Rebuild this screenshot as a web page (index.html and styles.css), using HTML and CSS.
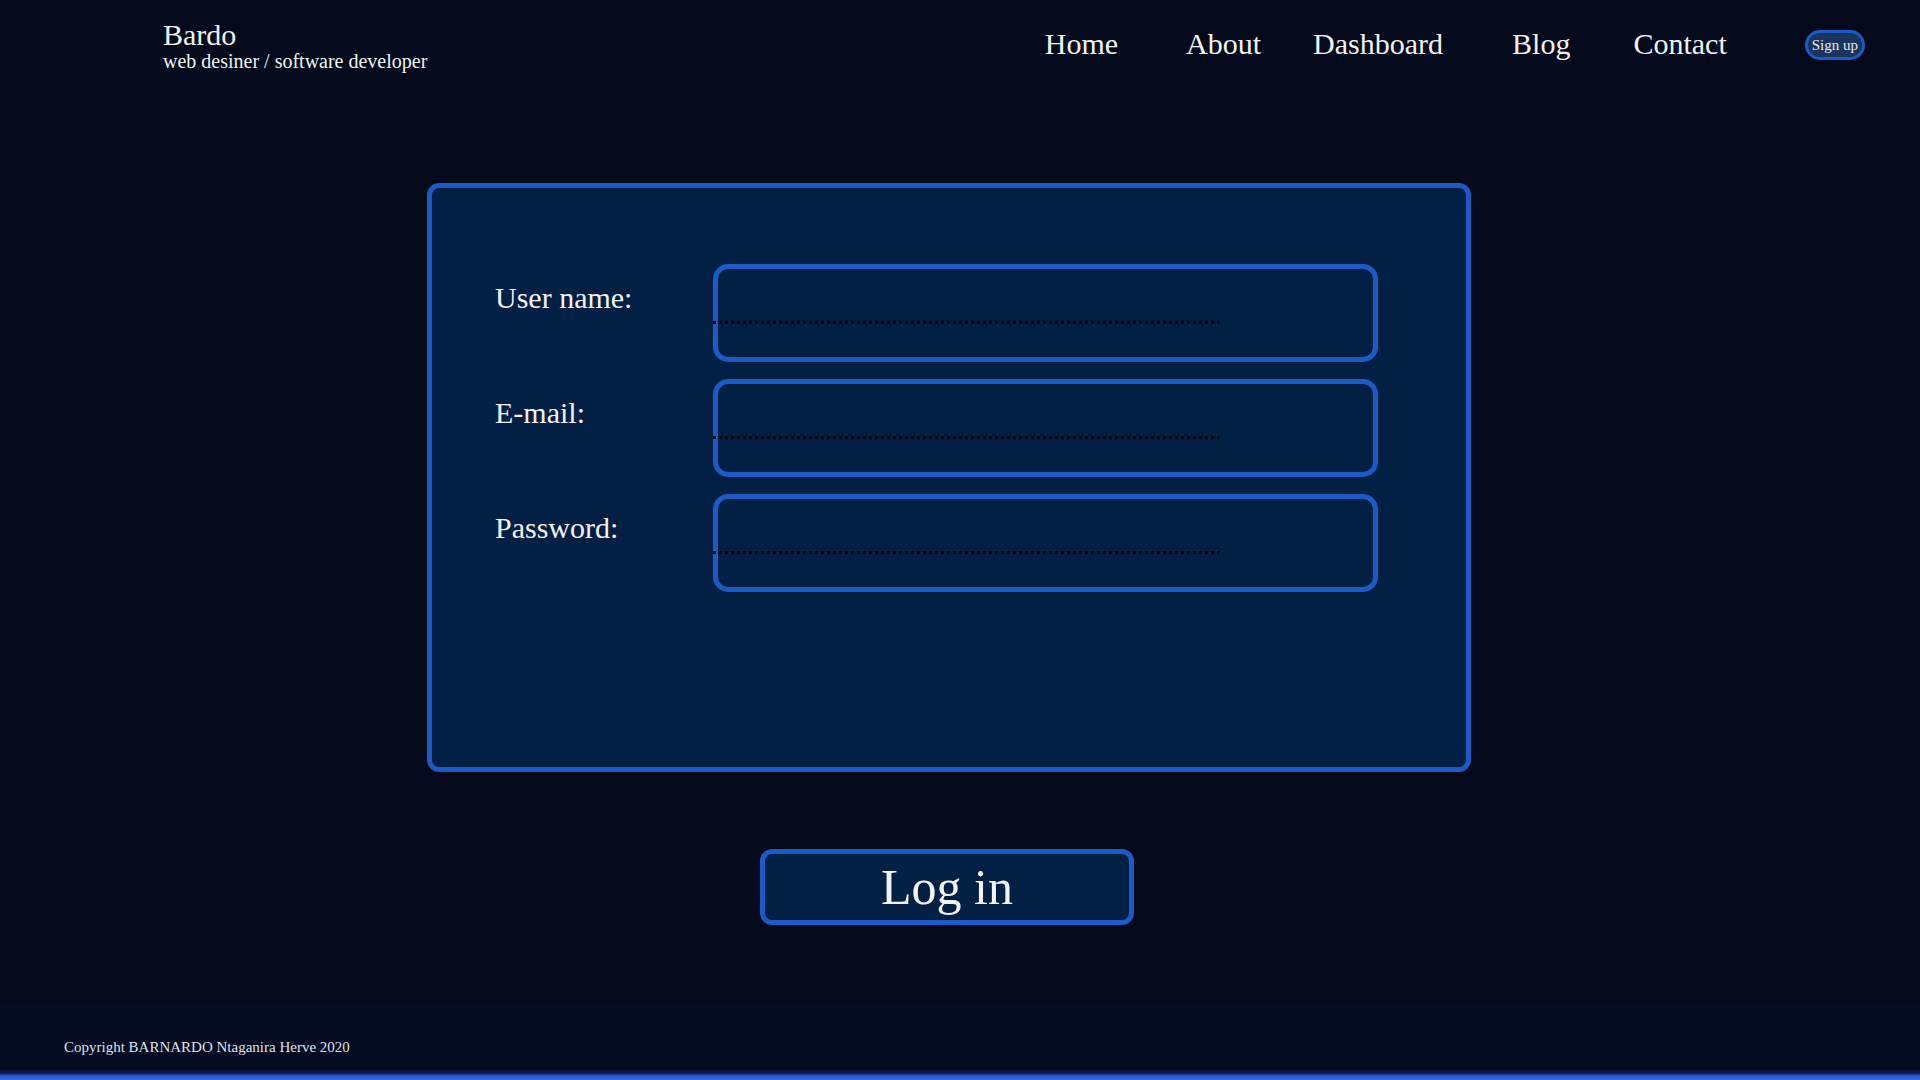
FILE: index.html
```html
<!DOCTYPE html>
<html lang="en">
<head>
<meta charset="utf-8">
<title>Bardo - Log in</title>
<link rel="stylesheet" href="styles.css">
</head>
<body>
<header class="site-header">
  <div class="brand">
    <div class="brand-name">Bardo</div>
    <div class="brand-sub">web desiner / software developer</div>
  </div>
  <nav class="nav">
    <a class="nav-link nav-home" href="#">Home</a>
    <a class="nav-link nav-about" href="#">About</a>
    <a class="nav-link nav-dash" href="#">Dashboard</a>
    <a class="nav-link nav-blog" href="#">Blog</a>
    <a class="nav-link nav-contact" href="#">Contact</a>
    <a class="signup" href="#">Sign up</a>
  </nav>
</header>

<main class="main">
  <form class="login-box">
    <div class="row">
      <label class="label" for="u">User name:</label>
      <div class="field"><input class="input" id="u" type="text"></div>
    </div>
    <div class="row">
      <label class="label" for="e">E-mail:</label>
      <div class="field"><input class="input" id="e" type="email"></div>
    </div>
    <div class="row">
      <label class="label" for="p">Password:</label>
      <div class="field"><input class="input" id="p" type="password"></div>
    </div>
  </form>
  <button class="login-btn" type="button">Log in</button>
</main>

<footer class="footer">
  <p class="copy">Copyright BARNARDO Ntaganira Herve 2020</p>
</footer>
</body>
</html>
```

FILE: styles.css
```css
* { box-sizing: border-box; }

html, body {
  margin: 0;
  padding: 0;
}

body {
  background: #040a1b;
  color: #f2f2f2;
  font-family: "Liberation Serif", "Times New Roman", serif;
  height: 1080px;
  overflow: hidden;
  display: flex;
  flex-direction: column;
}

.site-header {
  display: flex;
  align-items: flex-start;
  padding: 20px 55px 0 163px;
  height: 72px;
}

.brand-name {
  font-size: 30px;
  line-height: 30px;
}

.brand-sub {
  font-size: 20px;
  line-height: 22px;
}

.nav {
  margin-left: auto;
  margin-top: 9px;
  display: flex;
  align-items: flex-start;
}

.nav-link {
  color: #f2f2f2;
  text-decoration: none;
  font-size: 30px;
  line-height: 30px;
}

.nav-about { margin-left: 68px; }
.nav-dash { margin-left: 52px; }
.nav-blog { margin-left: 69px; }
.nav-contact { margin-left: 63px; }

.signup {
  margin-left: 78px;
  margin-top: 1px;
  height: 30px;
  padding: 0 4px;
  border: 3px solid #1a5bc6;
  border-radius: 15px;
  background: #1a345e;
  color: #e4e9f2;
  text-decoration: none;
  font-size: 15px;
  line-height: 24px;
}

.main {
  display: flex;
  flex-direction: column;
  align-items: flex-start;
}

.login-box {
  margin: 111px 0 0 427px;
  width: 1044px;
  height: 589px;
  border: 5px solid #1a5bc6;
  border-radius: 12px;
  background: #021f44;
  padding: 76px 0 0 63px;
  display: flex;
  flex-direction: column;
  gap: 17px;
}

.row {
  display: flex;
  align-items: flex-start;
}

.label {
  width: 218px;
  flex: none;
  font-size: 30px;
  line-height: 30px;
  padding-top: 19px;
  color: #f2f2f2;
}

.field {
  width: 665px;
  height: 98px;
  border: 5px solid #1a5bc6;
  border-radius: 15px;
  background: #021f44;
}

.input {
  display: block;
  margin: 0 0 0 -5px;
  width: 507px;
  height: 55px;
  padding: 0;
  border: none;
  border-bottom: 3px dotted #000;
  background: transparent;
  color: #f2f2f2;
  font-family: inherit;
  font-size: 20px;
  outline: none;
}

.login-btn {
  margin: 77px 0 0 760px;
  width: 374px;
  height: 76px;
  border: 5px solid #1a5bc6;
  border-radius: 12px;
  background: #021f44;
  color: #f4f4f6;
  font-family: "Liberation Serif", "Times New Roman", serif;
  font-size: 50px;
  line-height: 66px;
  padding: 0;
  cursor: pointer;
}

.footer {
  margin-top: auto;
  height: 78px;
  padding: 37px 0 0 64px;
  background: linear-gradient(to bottom, #050c21 0, #050c21 calc(100% - 11px), #0b1c52 calc(100% - 7px), #2f58d4 calc(100% - 4px), #3d66e4 100%);
}

.copy {
  margin: 0;
  font-size: 15px;
  line-height: 17px;
  color: #dde2ea;
}
```
